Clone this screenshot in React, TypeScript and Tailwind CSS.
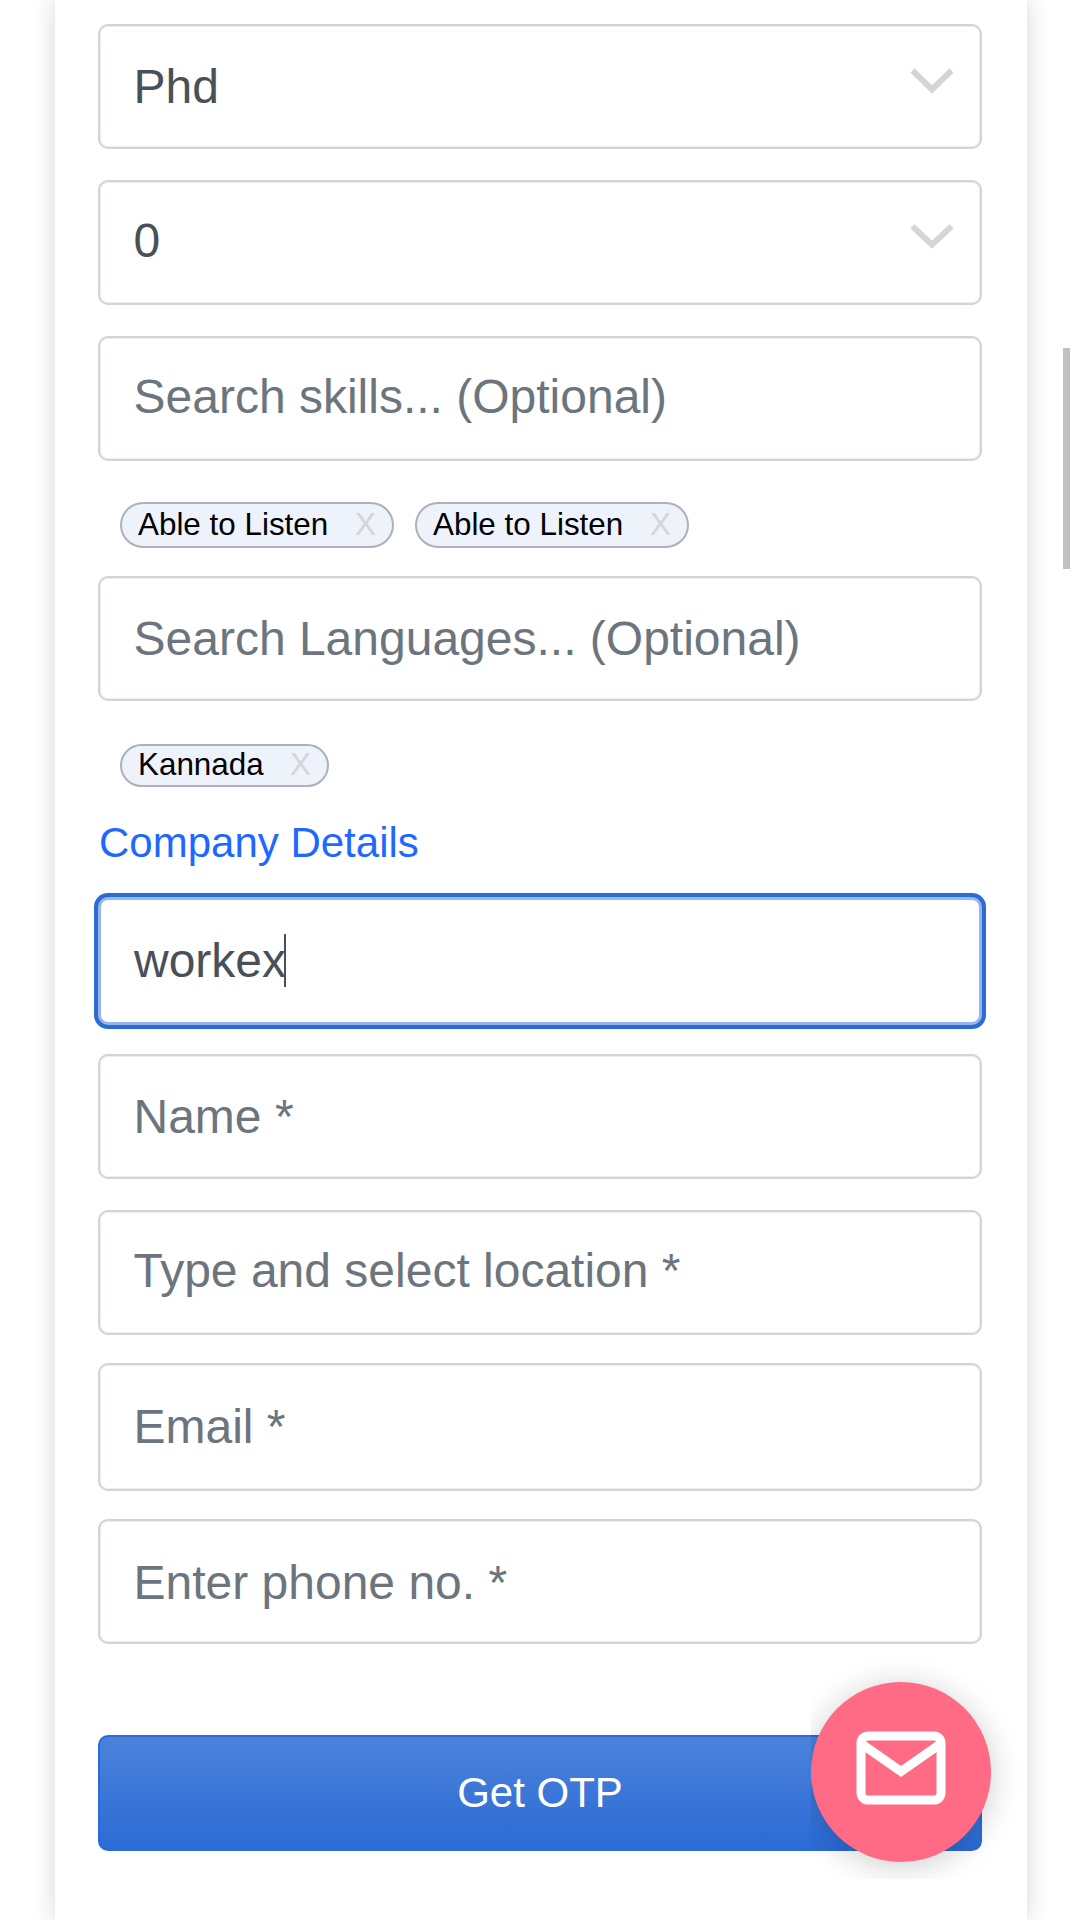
import React from "react";

const font = "font-['Liberation_Sans',Arial,sans-serif]";

function Field({ box, children }: { box: string; children: React.ReactNode }) {
  return (
    <div className={`flex w-[884px] items-center rounded-[10px] border-2 border-[#ced4da] bg-white pl-[33.5px] text-[48px] leading-[56px] whitespace-nowrap text-[#6c757d] shadow-[inset_0_0_0_1px_#eceff2] ${box}`}>
      {children}
    </div>
  );
}

function Chevron({ className }: { className: string }) {
  return (
    <svg className={className} viewBox="0 0 44 26" preserveAspectRatio="none" fill="none" stroke="#d5d5d5" strokeWidth="6">
      <path d="M2.5 2.5 22 21.5 41.5 2.5" strokeLinejoin="miter" />
    </svg>
  );
}

function Chip({ label, size }: { label: string; size: string }) {
  return (
    <div className={`flex items-center justify-between rounded-full border-[2px] border-[#adb1b9] bg-[#eef2fb] pr-[16px] pl-[16px] text-[31.4px] leading-[36px] whitespace-nowrap text-black ${size}`}>
      <span>{label}</span>
      <span className="text-[#d5d5d5]">X</span>
    </div>
  );
}

export default function App() {
  return (
    <div className={`relative flex h-[1920px] w-[1080px] overflow-hidden bg-white ${font}`}>
      <main className="ml-[55px] h-[1920px] w-[972px] bg-white px-[43px] pt-[24px] shadow-[0_0_24px_rgba(0,0,0,0.16)]">
        <Field box="h-[125px]">
          <span className="flex-1 text-[#495057]">Phd</span>
          <Chevron className="mr-[26px] mb-[11px] h-[26px] w-[44px]" />
        </Field>
        <Field box="mt-[31px] h-[125px]">
          <span className="mb-[4px] flex-1 text-[#495057]">0</span>
          <Chevron className="mr-[26px] mb-[13px] h-[25px] w-[44px]" />
        </Field>
        <Field box="mt-[31px] h-[125px] pb-[3px]">Search skills... (Optional)</Field>
        <div className="mt-[41px] ml-[22px] flex gap-[21px]">
          <Chip label="Able to Listen" size="h-[46px] w-[274px]" />
          <Chip label="Able to Listen" size="h-[46px] w-[274px]" />
        </div>
        <Field box="mt-[28px] h-[125px]">Search Languages... (Optional)</Field>
        <div className="mt-[43px] ml-[22px] flex">
          <Chip label="Kannada" size="h-[43px] w-[209px] pb-[2px]" />
        </div>
        <h2 className="mt-[32px] ml-[1px] h-[48px] text-[42px] leading-[48px] text-[#1f68ff]">Company Details</h2>
        <div className="mt-[30px] flex h-[128px] w-[884px] items-center rounded-[10px] border-[3px] border-[#96b5ea] bg-white pl-[33px] text-[48px] leading-[56px] text-[#495057] shadow-[0_0_0_4px_#2b6bd5]">
          <span>workex</span>
          <span className="mb-[2px] -ml-[2px] h-[53px] w-[2px] bg-[#495057]" />
        </div>
        <Field box="mt-[29px] h-[125px]">Name *</Field>
        <Field box="mt-[31px] h-[125px] pb-[4px]">Type and select location *</Field>
        <Field box="mt-[28px] h-[128px]">Email *</Field>
        <Field box="mt-[28px] h-[125px] pt-[2px]">Enter phone no. *</Field>
        <button className="mt-[91px] flex h-[116px] w-[884px] items-center justify-center rounded-[10px] border-2 border-[#2b6bd5] bg-gradient-to-b from-[#4b82db] to-[#2b6bd5] pb-[2px] text-[42px] text-white">
          Get OTP
        </button>
      </main>
      <div className="absolute top-[348px] left-[1063px] h-[221px] w-[7px] bg-[#c1c1c1]" />
      <div className="absolute top-[1640px] left-[811px] h-[239px] w-[230px] overflow-hidden">
        <button aria-label="Messages" className="mt-[42px] flex size-[180px] items-center justify-center rounded-full bg-[#ff6b84] pb-[9px] shadow-[0_4px_32px_rgba(0,0,0,0.2)]">
          <svg width="90" height="74" viewBox="0 0 90 74" fill="none" stroke="white" strokeWidth="9">
            <rect x="5" y="5" width="80" height="64" rx="7" />
            <path d="M5 12.5 45 40.5 85 12.5" />
          </svg>
        </button>
      </div>
    </div>
  );
}
